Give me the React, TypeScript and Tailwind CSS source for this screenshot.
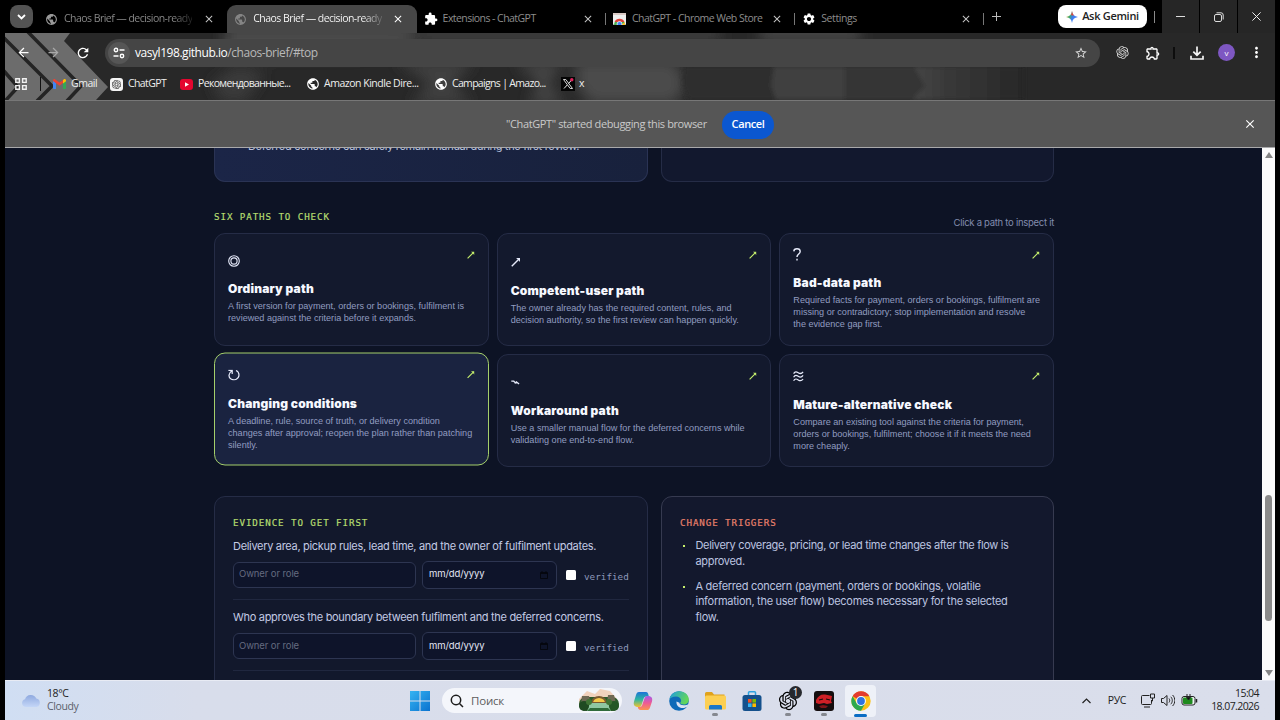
import React from 'react';
import {
  MdArrowBack,
  MdArrowForward,
  MdClose,
  MdExtension,
  MdMoreVert,
  MdOutlineExtension,
  MdPublic,
  MdRefresh,
  MdSettings,
  MdStarBorder,
} from 'react-icons/md';
import { RiOpenaiFill } from 'react-icons/ri';

/* ---------- small drawings ---------- */

const ToolbarArt = () => (
  <svg className="absolute inset-0" width="1270" height="67" viewBox="5 33 1270 67">
    <defs>
      <filter id="soft" x="-20%" y="-20%" width="140%" height="140%">
        <feGaussianBlur stdDeviation="7" />
      </filter>
      <filter id="softer" x="-10%" y="-10%" width="120%" height="120%">
        <feGaussianBlur stdDeviation="2" />
      </filter>
      <linearGradient id="fade" x1="0" x2="1">
        <stop offset="0" stopColor="#474747" />
        <stop offset="0.3" stopColor="#393939" />
        <stop offset="1" stopColor="#272727" />
      </linearGradient>
    </defs>
    <rect x="5" y="33" width="1270" height="67" fill="#282828" />
    <g filter="url(#soft)">
      <path d="M225 26h190v20l-60 10H225z" fill="#4c4c4c" />
      <path d="M235 66l30 6-20 30h-22l-12-18z" fill="#3a3a3a" />
      <path d="M395 60h80l-22 24 20 20H410l20-20z" fill="#3f3f3f" />
      <path d="M515 62h50l-16 22 18 20h-40l12-20z" fill="#444" />
      <path d="M575 60h100l12 24-12 20H590l-14-20z" fill="#4c4c4c" />
      <path d="M420 28h300v12H420z" fill="#444" />
      <path d="M760 28h100v12H760z" fill="#505050" />
    </g>
    <g filter="url(#softer)">
      <path d="M684 66h92l-3 16 5 18h-90l-6-16z" fill="#2d2d2d" />
      <path d="M774 66h80v34h-78l-5-14z" fill="#414141" />
      <path d="M845 66h70l11 20-11 14h-70z" fill="#353535" />
      <path d="M914 66h110v34H912l13-14z" fill="url(#fade)" />
    </g>
    <path d="M5 33h65l-6 8 44 46-12 13H5z" fill="#6c6c6c" />
    <g fill="none" stroke="#242424" strokeWidth="3.5">
      <path d="M27 31l54 55-14 15" />
      <path d="M3 37l49 49-15 15" />
      <path d="M3 70l15 17-13 14" />
    </g>
  </svg>
);

const TuneIcon = () => (
  <svg width="12" height="12" viewBox="0 0 12 12" fill="none" stroke="#fff" strokeWidth="1.4">
    <circle cx="3" cy="3" r="1.7" />
    <path d="M6.5 3H11.5M.5 9H5.5" />
    <circle cx="9" cy="9" r="1.7" />
  </svg>
);

const AppsIcon = () => (
  <svg width="12" height="12" viewBox="0 0 12 12" fill="none" stroke="#f1f1f1" strokeWidth="1.4">
    <path d="M.8.8h3.6v3.6H.8zM7.6.8h3.6v3.6H7.6zM.8 7.6h3.6v3.6H.8zM7.6 7.6h3.6v3.6H7.6z" />
  </svg>
);

const GmailIcon = () => (
  <svg width="13" height="10" viewBox="0 0 13 10">
    <path d="M0 1.5L3 4v6H1a1 1 0 0 1-1-1z" fill="#4285f4" />
    <path d="M13 1.5L10 4v6h2a1 1 0 0 0 1-1z" fill="#34a853" />
    <path d="M0 1.5C0 .3 1.4-.3 2.3.4L6.5 3.6 10.7.4 10 4 6.5 6.7 0 2z" fill="#ea4335" />
    <path d="M10 1l.7-.6c.9-.7 2.3-.1 2.3 1.1v.8L10 4.5z" fill="#fbbc04" />
  </svg>
);

const YoutubeIcon = () => (
  <svg width="13" height="11" viewBox="0 0 13 11">
    <rect width="13" height="11" rx="3" fill="#e4062f" />
    <path d="M5 3.2l4 2.3-4 2.3z" fill="#fff" />
  </svg>
);

const XIcon = () => (
  <svg width="14" height="14" viewBox="0 0 14 14">
    <rect width="14" height="14" fill="#050505" />
    <path d="M2.5 2.5h2.3l6.7 9H9.2z" fill="none" stroke="#eee" strokeWidth="0.9" />
    <path d="M11 2.5L7.5 6.5M6.2 8L3 11.5" stroke="#eee" strokeWidth="1" />
    <circle cx="10.8" cy="2.7" r="1.7" fill="#e0245e" />
  </svg>
);

const StoreFavicon = () => (
  <svg width="13" height="12" viewBox="0 0 13 12">
    <rect width="13" height="12" rx="1" fill="#eee" />
    <rect width="13" height="2" fill="#d9c9c4" />
    <path d="M1 12a5.500 5.500 0 0 1 11 0z" fill="#4caf50" />
    <path d="M1.500 9A5.500 5.500 0 0 1 11.500 9z" fill="#e0433a" />
    <path d="M8 12l4-3v3z" fill="#fbc02d" />
    <circle cx="6.5" cy="11" r="2.5" fill="#4285f4" stroke="#fff" strokeWidth="0.7" />
  </svg>
);

const GeminiIcon = () => (
  <svg width="12" height="12" viewBox="0 0 12 12">
    <defs>
      <linearGradient id="gem" x1="0" y1="0.3" x2="1" y2="0.7">
        <stop offset="0" stopColor="#f2b632" />
        <stop offset="0.3" stopColor="#3fa76a" />
        <stop offset="0.55" stopColor="#3b7df0" />
        <stop offset="1" stopColor="#4b86f5" />
      </linearGradient>
    </defs>
    <path d="M6 0C6.500 3.600 8.400 5.500 12 6 8.400 6.500 6.500 8.400 6 12 5.500 8.400 3.600 6.500 0 6 3.600 5.500 5.500 3.600 6 0z" fill="url(#gem)" />
    <path d="M6 0C6.300 2.200 7 3.600 8.200 4.600L5 4.200C5.600 3 5.900 1.600 6 0z" fill="#ea4335" />
  </svg>
);

const DownloadIcon = () => (
  <svg width="14" height="14" viewBox="0 0 14 14" fill="none" stroke="#f5f5f5" strokeWidth="1.7">
    <path d="M7 .5v8.500M3.300 5.600L7 9.200l3.700-3.600M1 9.800v3.200h12V9.800" />
  </svg>
);

const RestoreIcon = () => (
  <svg width="10" height="10" viewBox="0 0 10 10" fill="none" stroke="#ddd">
    <rect x="0.5" y="2.5" width="7" height="7" rx="1.5" />
    <path d="M2.500 .8H7a2.200 2.200 0 0 1 2.200 2.200v4.500" />
  </svg>
);

const PathArrow = ({ size }: { size: number }) => (
  <svg width={size} height={size} viewBox="0 0 8 8" fill="none" stroke="currentColor" strokeWidth="1.1">
    <path d="M.6 7.400L6.600 1.400" />
    <path d="M4 .8h3.200v3.200L5.800 2.200z" fill="currentColor" stroke="none" />
  </svg>
);

const icons: Record<string, React.ReactNode> = {
  ring: (
    <svg width="12" height="12" viewBox="0 0 12 12" fill="none" stroke="currentColor" strokeWidth="1.1">
      <circle cx="6" cy="6" r="5.3" />
      <circle cx="6" cy="6" r="3.1" />
    </svg>
  ),
  arrow: <PathArrow size={10} />,
  question: (
    <svg width="8" height="13" viewBox="0 0 8 13" fill="none" stroke="currentColor" strokeWidth="1.4">
      <path d="M.8 3.400C.9 1.700 2.200.8 4 .8s3.200 1 3.200 2.700C7.200 5.900 4 6 4 9" />
      <path d="M4 10.800v1.700" />
    </svg>
  ),
  loop: (
    <svg width="12" height="11" viewBox="0 0 12 11" fill="none" stroke="currentColor" strokeWidth="1.2">
      <path d="M.4.900h3.800v3.700M4 1.200C.2 3.500.2 8 3 9.600c3.500 2 8-.3 8-4C11 3.500 10 1.800 8 1" />
    </svg>
  ),
  squiggle: (
    <svg width="9" height="5" viewBox="0 0 9 5" fill="none" stroke="currentColor" strokeWidth="1.3">
      <path d="M.3 1.200h2.500l1.600 1.700 1-1 2.700 2M3.600 2.900l2 .2" />
    </svg>
  ),
  waves: (
    <svg width="11" height="11" viewBox="0 0 11 11" fill="none" stroke="currentColor" strokeWidth="1.2">
      <path d="M.6 2.600c1.500-2.500 3-2 4.600-.9s3.200 1.500 4.900-.9M.6 6.200c1.500-2.500 3-2 4.600-.9s3.200 1.500 4.900-.9M.6 9.800c1.500-2.500 3-2 4.600-.9s3.200 1.500 4.900-.9" />
    </svg>
  ),
};

/* ---------- browser chrome ---------- */

interface TabProps {
  icon: React.ReactNode;
  title: React.ReactNode;
  active?: boolean;
  line?: boolean;
  spacing: string;
}

const Tab = ({ icon, title, active, line, spacing }: TabProps) => (
  <div
    className={`flex h-7 w-[189.3px] shrink-0 items-center pl-[7px] ${
      active ? 'rounded-t-[9px] bg-[#474747] text-white' : 'text-[#8d8d8d]'
    }`}
  >
    <span className="flex w-[19px] shrink-0 items-center">{icon}</span>
    <span className={`-mt-px w-[133px] whitespace-nowrap text-[10.5px] ${spacing}`}>{title}</span>
    <MdClose size={12} className={`ml-[6px] shrink-0 ${active ? 'text-white' : 'text-[#c4c4c4]'}`} />
    {line && <span className="ml-auto h-3 w-px bg-[#777]" />}
  </div>
);

const TabStrip = () => (
  <div className="flex h-[33px] items-end bg-black pl-[5px]">
    <button className="mb-[5px] flex h-[23px] w-[23px] items-center justify-center rounded-[8px] bg-[#535353]">
      <svg width="9" height="6" viewBox="0 0 9 6" fill="none" stroke="#fff" strokeWidth="1.8">
        <path d="M1 1l3.500 3.500L8 1" />
      </svg>
    </button>
    <div className="ml-[5px] flex">
      <Tab
        icon={<MdPublic size={13} className="text-[#999]" />}
        title={<span className="bg-linear-to-r from-[#8d8d8d] from-85% to-[#222] bg-clip-text text-transparent">Chaos Brief — decision-ready</span>}
        spacing="tracking-[-0.54px]"
      />
      <Tab
        active
        icon={<MdPublic size={13} className="text-[#858585]" />}
        title={<span className="bg-linear-to-r from-white from-85% to-[#666] bg-clip-text text-transparent">Chaos Brief — decision-ready</span>}
        spacing="tracking-[-0.54px]"
      />
      <Tab line icon={<MdExtension size={14} className="text-white" />} title="Extensions - ChatGPT" spacing="tracking-[-0.55px]" />
      <Tab line icon={<StoreFavicon />} title="ChatGPT - Chrome Web Store" spacing="tracking-[-0.52px]" />
      <Tab line icon={<MdSettings size={14} className="text-white" />} title="Settings" spacing="tracking-[-0.4px]" />
    </div>
    <svg className="mb-3 ml-2 shrink-0" width="9" height="9" viewBox="0 0 9 9" stroke="#bbb" fill="none">
      <path d="M4.500 0v9M0 4.500h9" />
    </svg>
    <div className="ml-auto flex h-full items-center">
      <button className="flex h-[23px] w-[89px] items-center justify-center gap-1 rounded-[8px] bg-white text-[11px] font-semibold tracking-[-0.3px] text-[#222]">
        <GeminiIcon />
        Ask Gemini
      </button>
      <span className="ml-[7px] h-3 w-px bg-[#8a8a8a]" />
      <div className="ml-[7px] flex h-full gap-px">
        <span className="flex w-[37px] items-center justify-center bg-[#262626]">
          <span className="h-px w-[9px] bg-[#ddd]" />
        </span>
        <span className="flex w-[37px] items-center justify-center bg-[#262626]">
          <RestoreIcon />
        </span>
        <span className="flex w-[37px] items-center justify-center bg-[#262626]">
          <svg width="9" height="9" viewBox="0 0 9 9" stroke="#eee" fill="none">
            <path d="M.4.400l8.200 8.200M8.600.400L.4 8.600" />
          </svg>
        </span>
      </div>
    </div>
  </div>
);

const Toolbar = () => (
  <div className="relative h-[67px]">
    <ToolbarArt />
    <div className="relative flex h-[39px] items-center pl-[11px]">
      <MdArrowBack size={15} className="text-white" />
      <MdArrowForward size={15} className="ml-[15px] text-[#a8a8a8]" />
      <MdRefresh size={16} className="ml-[14px] text-white" />
      <div className="ml-[14px] mt-px flex h-7 w-[995px] items-center rounded-full bg-[#454545] pl-[3px] pr-3">
        <span className="flex h-[22px] w-[22px] items-center justify-center rounded-full bg-[#565656]">
          <TuneIcon />
        </span>
        <span className="ml-[5px] text-[12px] tracking-[-0.45px] text-white">
          vasyl198.github.io<span className="text-[#b9b9b9]">/chaos-brief/#top</span>
        </span>
        <MdStarBorder size={14} className="ml-auto text-[#d5d5d5]" />
      </div>
      <RiOpenaiFill size={15} className="ml-[15px] text-[#dcdcdc]" />
      <MdOutlineExtension size={16} className="ml-[15px] text-white" />
      <span className="ml-[12px] h-3 w-[2px] bg-[#0d0d0d]" />
      <span className="ml-[15px]">
        <DownloadIcon />
      </span>
      <span className="ml-[14px] flex h-[17px] w-[17px] items-center justify-center rounded-full bg-[#7e57c2] text-[8px] text-white">
        v
      </span>
      <MdMoreVert size={17} className="ml-[13px] text-white" />
    </div>
    <div className="relative mt-px flex h-[22px] items-center pl-[10px] text-[10.5px] text-[#eee]">
      <AppsIcon />
      <span className="ml-[13px] h-[14px] w-px bg-[#111]" />
      <span className="ml-[12px]">
        <GmailIcon />
      </span>
      <span className="ml-[5px] w-[39px] tracking-[-0.45px]">Gmail</span>
      <span className="flex h-[13px] w-[13px] items-center justify-center rounded-[3px] bg-[#f4f4f4]">
        <RiOpenaiFill size={11} className="text-[#333]" />
      </span>
      <span className="ml-[5px] w-[52px] tracking-[-0.6px]">ChatGPT</span>
      <YoutubeIcon />
      <span className="ml-[5px] w-[108px] whitespace-nowrap tracking-[-0.65px]">Рекомендованные...</span>
      <MdPublic size={14} className="text-white" />
      <span className="ml-1 w-[110px] whitespace-nowrap tracking-[-0.48px]">Amazon Kindle Dire...</span>
      <MdPublic size={14} className="text-white" />
      <span className="ml-1 w-[109px] whitespace-nowrap tracking-[-0.68px]">Campaigns | Amazo...</span>
      <XIcon />
      <span className="ml-1">x</span>
    </div>
  </div>
);

const DebugBar = () => (
  <div className="flex h-12 items-center border-b border-t border-b-[#a9a9ab] border-t-[#777] bg-[#565656] pl-[501px] pr-[18px]">
    <span className="w-[216px] whitespace-nowrap text-[11px] tracking-[-0.38px] text-[#c9c9c9]">"ChatGPT" started debugging this browser</span>
    <button className="mt-px h-7 w-[52px] rounded-full bg-[#0b57d0] text-[11px] font-semibold tracking-[-0.4px] text-white">Cancel</button>
    <MdClose size={14} className="ml-auto text-white" />
  </div>
);

/* ---------- page ---------- */

interface PathItem {
  icon: string;
  title: string;
  lines: string[];
  pad: string;
  active?: boolean;
}

const paths: PathItem[] = [
  {
    icon: 'ring',
    title: 'Ordinary path',
    lines: ['A first version for payment, orders or bookings, fulfilment is', 'reviewed against the criteria before it expands.'],
    pad: 'pt-[16.5px]',
  },
  {
    icon: 'arrow',
    title: 'Competent-user path',
    lines: ['The owner already has the required content, rules, and', 'decision authority, so the first review can happen quickly.'],
    pad: 'pt-[18px]',
  },
  {
    icon: 'question',
    title: 'Bad-data path',
    lines: ['Required facts for payment, orders or bookings, fulfilment are', 'missing or contradictory; stop implementation and resolve', 'the evidence gap first.'],
    pad: 'pt-[10px]',
  },
  {
    icon: 'loop',
    title: 'Changing conditions',
    lines: ['A deadline, rule, source of truth, or delivery condition', 'changes after approval; reopen the plan rather than patching', 'silently.'],
    pad: 'pt-[11px]',
    active: true,
  },
  {
    icon: 'squiggle',
    title: 'Workaround path',
    lines: ['Use a smaller manual flow for the deferred concerns while', 'validating one end-to-end flow.'],
    pad: 'pt-[17px]',
  },
  {
    icon: 'waves',
    title: 'Mature-alternative check',
    lines: ['Compare an existing tool against the criteria for payment,', 'orders or bookings, fulfilment; choose it if it meets the need', 'more cheaply.'],
    pad: 'pt-[11px]',
  },
];

const PathCard = ({ item }: { item: PathItem }) => (
  <div
    className={`relative h-[113px] rounded-[11px] border pl-[13px] ${item.pad} ${
      item.active ? '-translate-y-[1.5px] border-[#a4cf6b] bg-[#1a2340]' : 'border-[#252c46] bg-[#13192d]'
    }`}
  >
    <span className="absolute right-[13px] top-[17px] text-[#c5ee6c]">
      <PathArrow size={8} />
    </span>
    <div className="flex h-5 items-center text-[#e6eafa]">{icons[item.icon]}</div>
    <h3 className="mt-[9.5px] whitespace-nowrap font-[Inter] text-[12px] font-black leading-[18px] tracking-[0.19px] text-[#f6f8ff]">{item.title}</h3>
    <p className="mt-[2px] whitespace-nowrap font-['Liberation_Sans'] text-[9.1px] leading-[12.4px] text-[#929dc0]">
      {item.lines.map((line) => (
        <span key={line} className="block">
          {line}
        </span>
      ))}
    </p>
  </div>
);

const EvidenceRow = ({ text }: { text: string }) => (
  <div className="h-[71.3px]">
    <p className="whitespace-nowrap text-[11px] leading-4 tracking-[-0.31px] text-[#c3cae4]">{text}</p>
    <div className="mt-[7px] flex h-7 items-center">
      <div className="flex h-[26px] w-[183px] items-center rounded-[6px] border border-[#2d3551] bg-[#0e142a] pl-[5px] text-[9.5px] tracking-[-0.1px] text-[#656b80]">
        Owner or role
      </div>
      <div className="ml-[6px] flex h-7 w-[135px] items-center justify-between rounded-[6px] border border-[#2d3551] bg-[#0e142a] pl-[6px] pr-2 text-[9.5px] tracking-[-0.1px] text-[#e3e7f5]">
        mm/dd/yyyy
        <svg width="8" height="8" viewBox="0 0 8 8" fill="none" stroke="#05070f">
          <path d="M.5 1.500h7v6h-7zM.5 2.500h7M2 0v2M6 0v2" />
        </svg>
      </div>
      <span className="ml-[9px] h-[10px] w-[10px] rounded-[1.5px] bg-white" />
      <span className="ml-2 mt-[5px] font-['DejaVu_Sans_Mono'] text-[9.3px] text-[#8e98bb]">verified</span>
    </div>
    <div className="mt-[10px] h-px w-[396px] bg-[#20273f]" />
  </div>
);

const labelFont = "font-['DejaVu_Sans_Mono'] text-[9.2px] leading-3 tracking-[0.91px] [-webkit-text-stroke:0.2px]";

const Page = () => (
  <div className="flex h-[532px] overflow-hidden bg-[#0d1325]">
    <div className="ml-[209px] w-[840px] shrink-0 font-[Inter]">
      <div className="flex h-[34px] gap-[13px]">
        <div className="w-[434px] overflow-hidden rounded-b-[11px] border border-t-0 border-[#2a3354] bg-linear-to-r from-[#1b2547] to-[#18213c] pl-[33px]">
          <p className="-mt-[10px] whitespace-nowrap text-[11px] leading-4 tracking-[-0.32px] text-[#b9c1dc]">
            Deferred concerns can safely remain manual during the first review.
          </p>
        </div>
        <div className="w-[393px] rounded-b-[11px] border border-t-0 border-[#252c46] bg-[#12182e]" />
      </div>

      <div className="mt-[29px] flex h-[22px] justify-between">
        <h2 className={`${labelFont} text-[#b5dc70]`}>SIX PATHS TO CHECK</h2>
        <span className="mt-[5.5px] text-[9.5px] leading-3 tracking-[-0.28px] text-[#828cae]">Click a path to inspect it</span>
      </div>

      <div className="grid grid-cols-3 gap-x-[8px] gap-y-[8px]">
        {paths.map((item) => (
          <PathCard key={item.title} item={item} />
        ))}
      </div>

      <div className="mt-[29px] flex h-[300px] gap-[13px]">
        <section className="w-[434px] rounded-[11px] border border-[#252c46] bg-[#12182c] pl-[18px] pt-[19.5px]">
          <h2 className={`${labelFont} mb-[9px] text-[#b5dc70]`}>EVIDENCE TO GET FIRST</h2>
          <EvidenceRow text="Delivery area, pickup rules, lead time, and the owner of fulfilment updates." />
          <EvidenceRow text="Who approves the boundary between fulfilment and the deferred concerns." />
        </section>
        <section className="w-[393px] rounded-[11px] border border-[#363a50] bg-[#13182d] pl-[18px] pt-[19.5px]">
          <h2 className={`${labelFont} text-[#e8806c]`}>CHANGE TRIGGERS</h2>
          <ul className="mt-[9.5px] flex flex-col gap-[9px] whitespace-nowrap text-[11px] leading-[15.8px] tracking-[-0.33px] text-[#bcc4e0]">
            <li className="flex">
              <span className="ml-[3px] mt-[7px] mr-[10.5px] h-[2px] w-[2px] bg-[#c5ee6c]" />
              <span>
                Delivery coverage, pricing, or lead time changes after the flow is
                <br />
                approved.
              </span>
            </li>
            <li className="flex tracking-[-0.28px]">
              <span className="ml-[3px] mt-[7px] mr-[10.5px] h-[2px] w-[2px] bg-[#c5ee6c]" />
              <span>
                A deferred concern (payment, orders or bookings, volatile
                <br />
                information, the user flow) becomes necessary for the selected
                <br />
                flow.
              </span>
            </li>
          </ul>
        </section>
      </div>
    </div>

    <div className="ml-auto flex w-[13px] flex-col items-center bg-[#fafafa]">
      <svg className="mt-1" width="8" height="6" viewBox="0 0 8 6">
        <path d="M4 0l4 6H0z" fill="#858585" />
      </svg>
      <span className="mt-[337px] h-[126px] w-[7px] rounded-full bg-[#8b8b8b]" />
      <svg className="mt-[49px]" width="8" height="6" viewBox="0 0 8 6">
        <path d="M4 6l4-6H0z" fill="#858585" />
      </svg>
    </div>
  </div>
);

/* ---------- taskbar ---------- */

const CloudIcon = () => (
  <svg width="20" height="13" viewBox="0 0 20 13">
    <defs>
      <linearGradient id="cloud" x1="0" y1="0" x2="0" y2="1">
        <stop offset="0" stopColor="#8fa9df" />
        <stop offset="1" stopColor="#c4d6f7" />
      </linearGradient>
    </defs>
    <path d="M4.500 13A4 4 0 0 1 4 5.200 6 6 0 0 1 15.300 4.600 4.300 4.300 0 0 1 15.500 13z" fill="url(#cloud)" />
  </svg>
);

const WindowsIcon = () => (
  <svg width="20" height="20" viewBox="0 0 20 20">
    <defs>
      <linearGradient id="win" x1="0" y1="0" x2="1" y2="1">
        <stop offset="0" stopColor="#35b4f2" />
        <stop offset="1" stopColor="#0a72cf" />
      </linearGradient>
    </defs>
    <path d="M0 0h9.500v9.500H0zM10.500 0H20v9.500h-9.500zM0 10.500h9.500V20H0zM10.500 10.500H20V20h-9.500z" fill="url(#win)" />
  </svg>
);

const SearchScene = () => (
  <svg width="42" height="23" viewBox="0 0 42 23">
    <path d="M1 10L9 2l8 3 5-5 10 2 7 8v5H1z" fill="#f1d2bd" />
    <rect x="1" y="8" width="40" height="14" rx="7" fill="#2d5a2c" />
    <path d="M4 7h7l2 9H3zM30 6h6l2 9h-9z" fill="#6f6a55" />
    <path d="M14 14a7 6 0 0 1 14 0z" fill="#f3c84a" stroke="#7a5a30" strokeWidth="2" />
    <path d="M12 14h18l3 8H9z" fill="#8fc7a2" />
    <circle cx="6" cy="17" r="5" fill="#1f4a22" />
    <circle cx="36" cy="17" r="5" fill="#245726" />
    <circle cx="11" cy="13" r="3" fill="#3f7434" />
    <circle cx="31" cy="13" r="3" fill="#3f7434" />
    <path d="M9 22l3-3h18l3 3z" fill="#2f6b3a" />
  </svg>
);

const CopilotIcon = () => (
  <svg width="20" height="20" viewBox="0 0 20 20">
    <defs>
      <linearGradient id="cpa" x1="0" y1="0" x2="0" y2="1">
        <stop offset="0" stopColor="#1c74d8" />
        <stop offset="0.5" stopColor="#2fb6a0" />
        <stop offset="1" stopColor="#f2c230" />
      </linearGradient>
      <linearGradient id="cpb" x1="0" y1="0" x2="0" y2="1">
        <stop offset="0" stopColor="#a55be8" />
        <stop offset="0.5" stopColor="#ee5a96" />
        <stop offset="1" stopColor="#fb9350" />
      </linearGradient>
    </defs>
    <path d="M6 1h7c1.500 0 2 1 2.500 3l.3 1.500h-2.500c-1.800 0-2.300 1-2.800 2.500l-2 6c-.5 1.500-1.300 2-2.800 2C2 16 0 14.500 1 10.500L3 4c.6-2 1.300-3 3-3z" fill="url(#cpa)" />
    <path d="M14 19H7.500c-1.500 0-2.200-.8-2.700-3h1.700c1.500 0 2.200-.7 2.700-2l2.200-6.500C12 6 12.500 5 14.500 5c3.500 0 5.500 1.500 4.500 5.500l-2 6C16.400 18.500 15.500 19 14 19z" fill="url(#cpb)" />
  </svg>
);

const EdgeIcon = () => (
  <svg width="20" height="20" viewBox="0 0 20 20">
    <defs>
      <linearGradient id="edg" x1="0" y1="0" x2="1" y2="0.4">
        <stop offset="0" stopColor="#1d9be2" />
        <stop offset="1" stopColor="#62d75a" />
      </linearGradient>
    </defs>
    <circle cx="10" cy="10" r="9.8" fill="#0f6ab8" />
    <path d="M.3 9C1 3.700 5 .2 10 .2c6 0 9.800 4 9.800 8.300 0 3.200-2.300 5-5 5-2.300 0-3.600-.8-3.600-1.500s.9-1 .9-2.600C12.100 7.300 10 5.500 7 5.500 3.700 5.500 1 7 .3 9z" fill="url(#edg)" />
    <path d="M7.500 10.500c-.5 4 2.500 6.500 6 6.500 1.800 0 3-.5 4.500-1.300l-1.500 2.300 3.500-5c-1.500.8-3.500 1.300-5.200 1.300-3 0-4.500-1-4.300-2.500z" fill="#dbe3f3" />
  </svg>
);

const FolderIcon = () => (
  <svg width="21" height="18" viewBox="0 0 21 18">
    <path d="M0 1.500A1.500 1.500 0 0 1 1.500 0H7l2 2.500h10.500V16H0z" fill="#e0a21c" />
    <rect y="3.5" width="21" height="14" rx="1.5" fill="#fccf52" />
    <path d="M4 17.500v-3a1.500 1.500 0 0 1 1.500-1.500h10a1.500 1.500 0 0 1 1.500 1.500v3z" fill="#1877c9" />
  </svg>
);

const StoreIcon = () => (
  <svg width="20" height="20" viewBox="0 0 20 20">
    <path d="M6.500 5V1.800A1 1 0 0 1 7.500.8h5a1 1 0 0 1 1 1V5" fill="none" stroke="#2fa3e0" strokeWidth="1.5" />
    <rect x="0.5" y="4" width="19" height="16" rx="2.5" fill="#14508c" />
    <path d="M6 8h3.600v3.600H6z" fill="#f25022" />
    <path d="M10.400 8H14v3.600h-3.600z" fill="#7fba00" />
    <path d="M6 12.400h3.600V16H6z" fill="#35b4f2" />
    <path d="M10.400 12.400H14V16h-3.600z" fill="#ffb900" />
  </svg>
);

const RedAppIcon = () => (
  <svg width="20" height="20" viewBox="0 0 20 20">
    <rect width="20" height="20" rx="3" fill="#140d0e" />
    <path d="M2 9c2-4 5-6 9-5.500L18 5l-1 5 1 2-5 1-3-1-5 1-3-1z" fill="#cf1f26" />
    <path d="M5 15l4-1 5 1-2 2H7z" fill="#7e1519" />
    <path d="M5 9l4-1M12 8l4 1" stroke="#140d0e" strokeWidth="1.2" />
  </svg>
);

const ChromeIcon = () => (
  <svg width="20" height="20" viewBox="0 0 20 20">
    <circle cx="10" cy="10" r="9.7" fill="#fbc116" />
    <path d="M10 10L1.600 5.150A9.700 9.700 0 0 1 18.400 5.150H10z" fill="#e33b2e" />
    <path d="M1.600 5.150A9.700 9.700 0 0 0 10 19.700L14.200 12.400 10 10 5.800 12.400z" fill="#2da94f" />
    <circle cx="10" cy="10" r="4.9" fill="#fff" />
    <circle cx="10" cy="10" r="3.9" fill="#2f74e0" />
  </svg>
);

const Taskbar = () => (
  <div className="flex h-10 items-center border-t border-[#e8ebf4] bg-linear-to-r from-[#d0def3] via-[#d8ddeb] via-15% to-[#dadeeb] text-[#222]">
    <div className="flex w-[405px] items-center gap-[6px] pl-4">
      <CloudIcon />
      <div className="mb-px text-[10.5px] leading-[13px] tracking-[-0.4px]">
        <div>18°C</div>
        <div className="text-[#5b606b]">Cloudy</div>
      </div>
    </div>
    <WindowsIcon />
    <div className="ml-3 flex h-[25px] w-[180px] items-center rounded-full bg-[#f4f6fb] pl-2">
      <svg width="14" height="14" viewBox="0 0 14 14" fill="none" stroke="#1c1c1c" strokeWidth="1.5">
        <circle cx="6" cy="6" r="4.7" />
        <path d="M9.500 9.500L13 13" />
      </svg>
      <span className="ml-[7px] text-[11.5px] tracking-[-0.2px] text-[#5d5d5d]">Поиск</span>
      <span className="ml-auto mr-[2px]">
        <SearchScene />
      </span>
    </div>
    <span className="ml-[11px]"><CopilotIcon /></span>
    <span className="ml-[16px]"><EdgeIcon /></span>
    <span className="relative ml-[16px]">
      <FolderIcon />
      <span className="absolute -bottom-[6px] left-[7px] h-[3px] w-[6px] rounded-full bg-[#85888f]" />
    </span>
    <span className="ml-[16px]"><StoreIcon /></span>
    <span className="relative ml-[15px]">
      <RiOpenaiFill size={22} className="text-black" />
      <span className="absolute -right-[3px] -top-[4px] flex h-[13px] w-[13px] items-center justify-center rounded-full bg-[#26282d] text-[10px] text-white">
        1
      </span>
      <span className="absolute -bottom-[4px] left-[8px] h-[3px] w-[6px] rounded-full bg-[#85888f]" />
    </span>
    <span className="relative ml-[15px]">
      <RedAppIcon />
      <span className="absolute -bottom-[5px] left-[7px] h-[3px] w-[6px] rounded-full bg-[#85888f]" />
    </span>
    <span className="relative ml-[11px] flex h-8 w-[31px] items-center justify-center rounded-[4px] bg-[#eef1f8]">
      <ChromeIcon />
      <span className="absolute bottom-0 left-[9px] h-[3px] w-[13px] rounded-full bg-[#0a6cc4]" />
    </span>

    <div className="ml-auto flex items-center pr-4">
      <svg width="9" height="6" viewBox="0 0 9 6" fill="none" stroke="#222" strokeWidth="1.2">
        <path d="M.5 5l4-4 4 4" />
      </svg>
      <span className="ml-[17px] text-[10.5px] tracking-[-0.4px]">РУС</span>
      <svg className="ml-[15px]" width="14" height="15" viewBox="0 0 14 15" fill="none" stroke="#222">
        <path d="M8.500 2.500H1.500a1 1 0 0 0-1 1v7a1 1 0 0 0 1 1h8a1 1 0 0 0 1-1V7M3 14h6M9.500 1h4v4h-4zM11.500 5v3h-1" />
      </svg>
      <svg className="ml-[6px]" width="14" height="13" viewBox="0 0 14 13" fill="none" stroke="#222">
        <path d="M.5 4.500h2L6 1.500v10L2.500 8.500h-2zM8 4.500c.9 1.200.9 2.800 0 4M9.800 2.800c2 2.200 2 5.200 0 7.400M11.600 1c3 3.300 3 7.700 0 11" />
      </svg>
      <svg className="ml-[6px]" width="17" height="13" viewBox="0 0 17 13" fill="none" stroke="#222">
        <rect x="1" y="2.5" width="13" height="8.5" rx="2" fill="#f0f2f6" />
        <rect x="2" y="3.5" width="9.5" height="6.5" rx="1" fill="#1d8a1d" stroke="none" />
        <path d="M15.500 5v3.500" strokeWidth="1.5" />
        <path d="M6 0v3M9 0v3M5.500 3.500h4L7.500 6z" fill="#111" />
      </svg>
      <div className="mb-px ml-[13px] w-[48px] whitespace-nowrap text-right text-[10.5px] leading-[13px] tracking-[-0.57px]">
        <div>15:04</div>
        <div>18.07.2026</div>
      </div>
    </div>
  </div>
);

const App: React.FC = () => (
  <div className="h-[720px] w-[1280px] overflow-hidden bg-black px-[5px] font-['Open_Sans',sans-serif]">
    <TabStrip />
    <Toolbar />
    <DebugBar />
    <Page />
    <Taskbar />
  </div>
);

export default App;
